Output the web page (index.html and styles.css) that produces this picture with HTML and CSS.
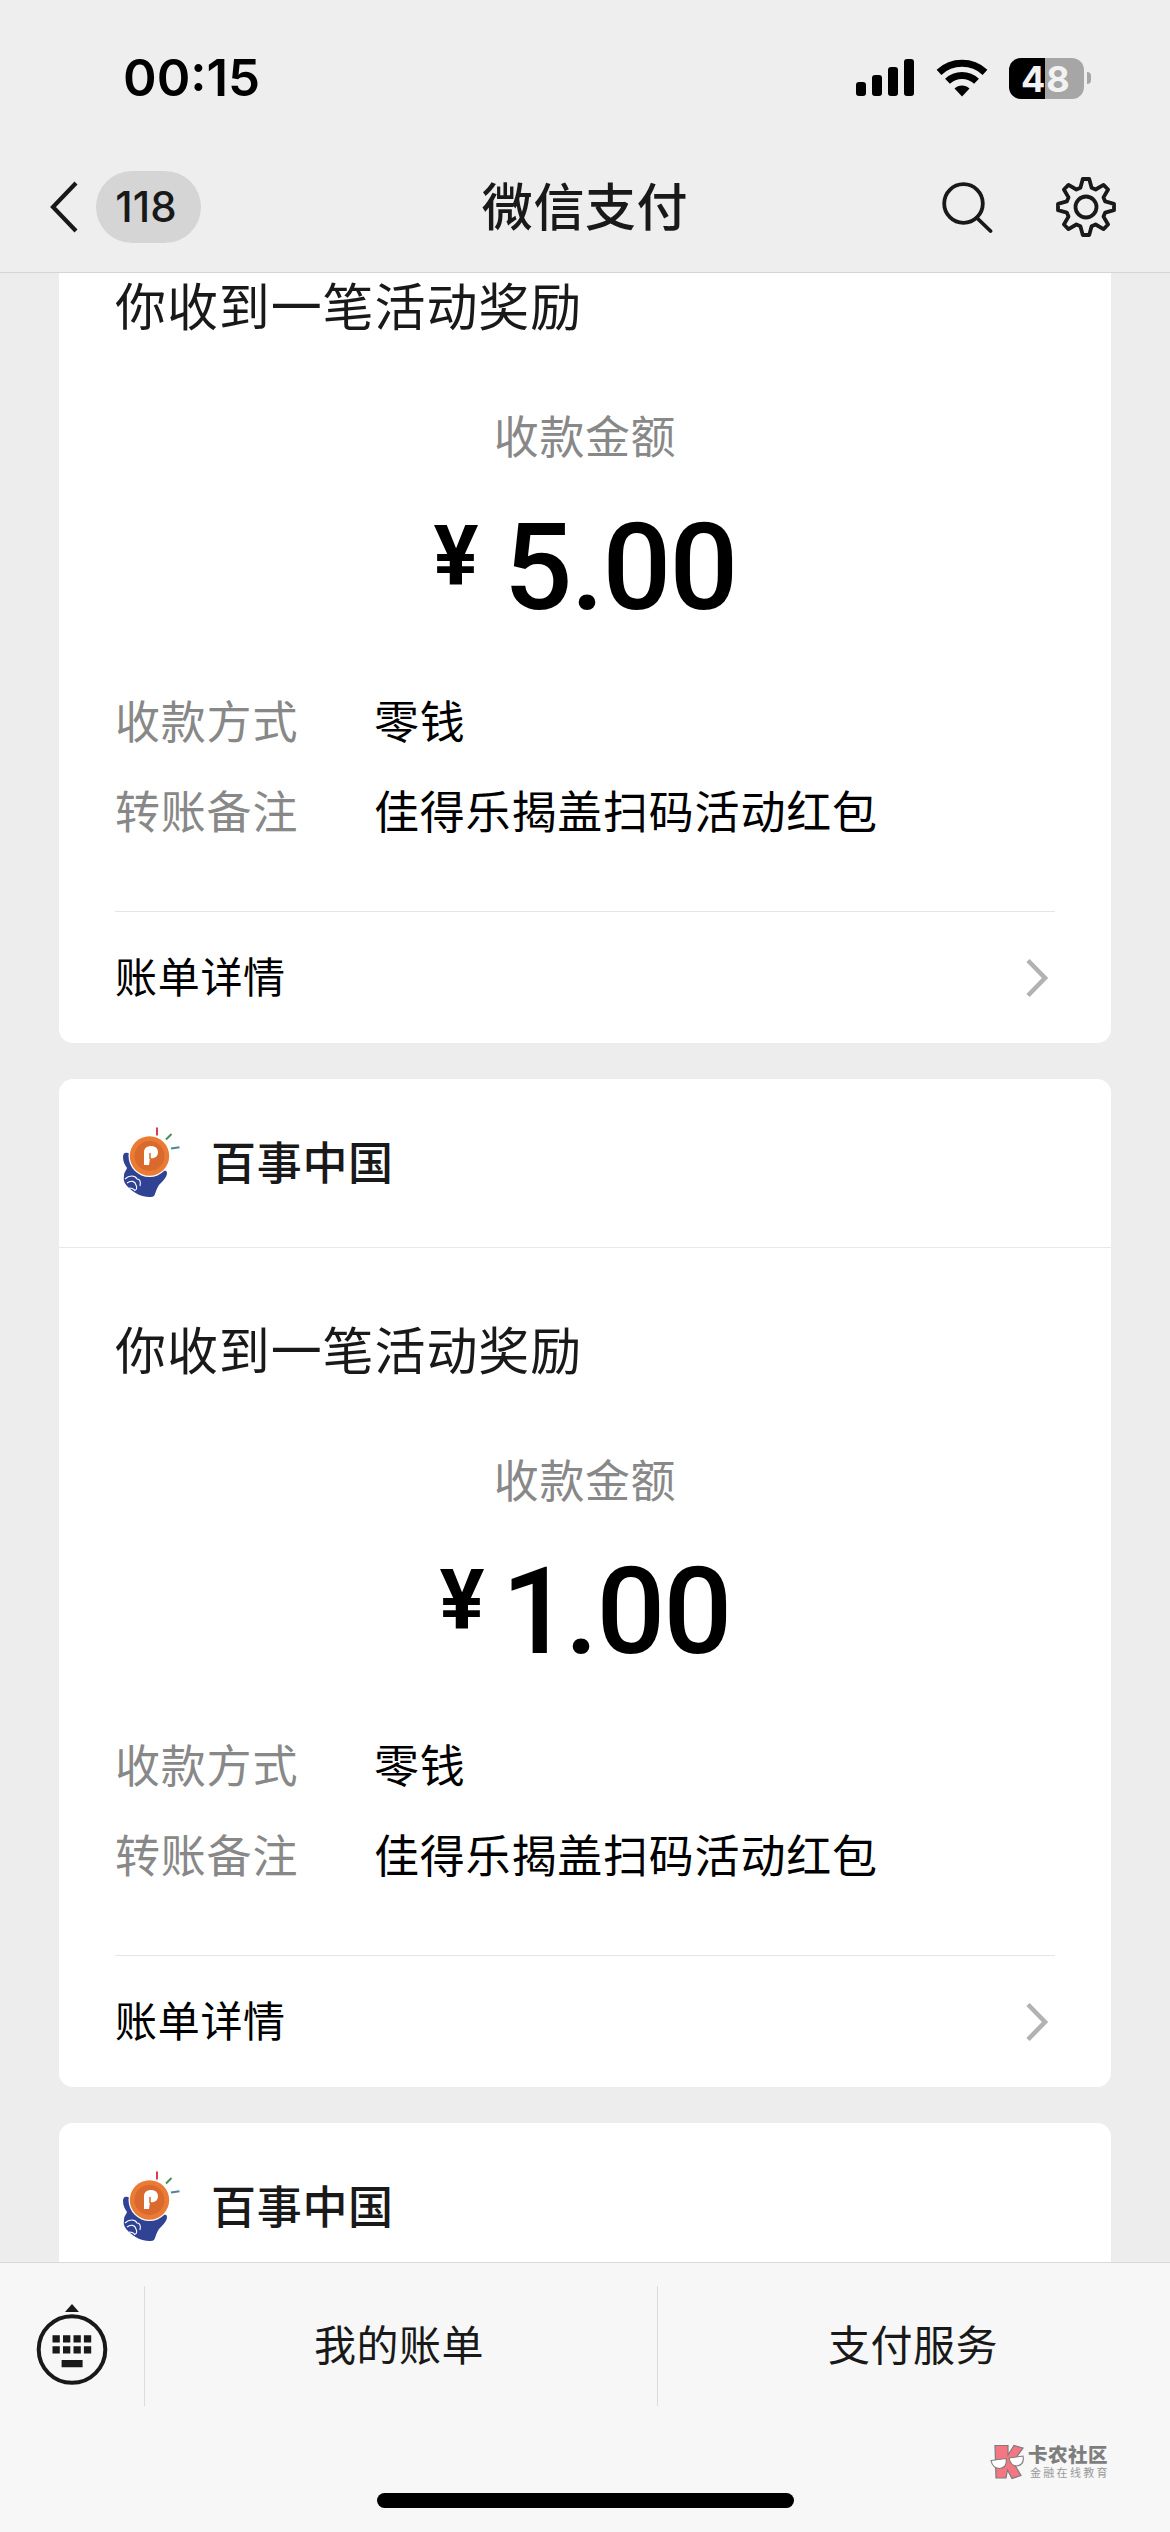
FILE: index.html
```html
<!DOCTYPE html>
<html lang="zh-CN">
<head>
<meta charset="utf-8">
<title>微信支付</title>
<link rel="stylesheet" href="styles.css">
</head>
<body>
<svg class="defs" width="0" height="0" aria-hidden="true">
  <symbol id="chevron" viewBox="0 0 24 42">
    <path d="M3 3.5 20 21 3 38.5" fill="none" stroke="#b2b2b2" stroke-width="4.6"/>
  </symbol>
  <symbol id="brand" viewBox="0 0 60 74">
    <path d="M1 31c0-4 2-5 5-4 2 0 2 3 2 6 2 9 9 16 18 17 6 1 11-3 14-5 2-1 5-1 5 2 0 4-4 8-8 12-2 3-3 6-4 9-1 3-3 3-6 3-7 0-15-4-20-9-4-4-6-7-5-12 0-4 2-5 3-8C3 39 1 36 1 31z" fill="#2f4293"/>
    <path d="M3 53c4-4 10-4 12 0 3 0 4 3 3 7M5 57c4-3 8-2 9 2 1 2 1 5-1 5M7 62c3 0 5 1 6 3" fill="none" stroke="#fff" stroke-width="1.1"/>
    <circle cx="27.500" cy="30" r="21" fill="#fff"/>
    <circle cx="27.500" cy="30" r="19.700" fill="#ea7b35"/>
    <circle cx="27.500" cy="30" r="15" fill="#d9692c"/>
    <path d="M22 39V26c0-8 14-8 14 0 0 5-4 7-8 6l-1 7z" fill="#fff"/>
    <path d="M28 27v6" stroke="#d9692c" stroke-width="1.500"/>
    <path d="M35 1.500v8" stroke="#d8334a" stroke-width="1.900"/>
    <path d="m44 13.500 5.500-5.500" stroke="#4d8c57" stroke-width="1.900"/>
    <path d="m49 22.500 8.500-1.200" stroke="#4a8598" stroke-width="1.900"/>
  </symbol>
</svg>

<div class="screen">
  <header class="top">
    <div class="status">
      <span class="time">00:15</span>
      <div class="indicators">
        <svg class="signal" viewBox="0 0 58 38"><rect x="0" y="23" width="10" height="14" rx="3"/><rect x="16" y="16" width="10" height="21" rx="3"/><rect x="32" y="8" width="10" height="29" rx="3"/><rect x="48" y="0" width="10" height="37" rx="3"/></svg>
        <svg class="wifi" viewBox="0 0 52 38"><path d="M26 37.500 18.500 29.500C22.500 25.500 29.500 25.500 33.500 29.500z"/><path d="M11.500 22.300A21 21 0 0 1 40.500 22.300" fill="none" stroke="#000" stroke-width="7"/><path d="M3 13.300A34 34 0 0 1 49 13.300" fill="none" stroke="#000" stroke-width="7"/></svg>
        <div class="battery"><span class="level"><b>4</b><b class="rest">8</b></span><i class="nub"></i></div>
      </div>
    </div>
    <nav class="nav">
      <div class="back">
        <svg class="arrow" viewBox="0 0 30 52"><path d="M27 2 4 26l23 24" fill="none" stroke="#191919" stroke-width="4.200"/></svg>
        <span class="unread">118</span>
      </div>
      <h1 class="title">微信支付</h1>
      <div class="tools">
        <svg class="search" viewBox="0 0 52 52"><circle cx="22.500" cy="22.500" r="19.300"/><path d="m36 37 13.500 13"/></svg>
        <svg class="gear" viewBox="-31 -31 62 62"><path d="M-5.600-19.200-3.200-28H3.200L5.600-19.200 9.600-17.500 17.500-22.100 22.100-17.500 17.500-9.600 19.200-5.600 28-3.200V3.200L19.200 5.600 17.500 9.600 22.100 17.500 17.500 22.100 9.600 17.500 5.600 19.200 3.200 28H-3.200L-5.600 19.200-9.600 17.500-17.500 22.100-22.100 17.500-17.500 9.600-19.200 5.600-28 3.200V-3.200L-19.200-5.600-17.500-9.600-22.100-17.500-17.500-22.100-9.600-17.500z"/><circle r="10.500"/></svg>
      </div>
    </nav>
  </header>

  <main class="feed">
    <article class="card card-cut">
      <div class="body">
        <h2 class="headline">你收到一笔活动奖励</h2>
        <p class="label">收款金额</p>
        <p class="amount"><span class="yen">¥</span><span class="num">5.00</span></p>
        <dl class="details">
          <dt>收款方式</dt><dd>零钱</dd>
          <dt>转账备注</dt><dd>佳得乐揭盖扫码活动红包</dd>
        </dl>
        <div class="more"><span>账单详情</span><svg class="chev"><use href="#chevron"/></svg></div>
      </div>
    </article>

    <article class="card">
      <div class="merchant"><svg class="brand"><use href="#brand"/></svg><span>百事中国</span></div>
      <div class="body">
        <h2 class="headline">你收到一笔活动奖励</h2>
        <p class="label">收款金额</p>
        <p class="amount"><span class="yen">¥</span><span class="num"><span class="one">1</span>.00</span></p>
        <dl class="details">
          <dt>收款方式</dt><dd>零钱</dd>
          <dt>转账备注</dt><dd>佳得乐揭盖扫码活动红包</dd>
        </dl>
        <div class="more"><span>账单详情</span><svg class="chev"><use href="#chevron"/></svg></div>
      </div>
    </article>

    <article class="card">
      <div class="merchant"><svg class="brand"><use href="#brand"/></svg><span>百事中国</span></div>
    </article>
  </main>

  <footer class="bottom">
    <div class="menu">
      <div class="kbd">
        <svg viewBox="0 0 72 84"><path d="M36 2l7 8H29z" fill="#191919"/><circle cx="36" cy="47.500" r="33.300" fill="none" stroke="#191919" stroke-width="4"/><path d="M16.500 33.300h7.300v7.300h-7.300zM27 33.300h7.300v7.300H27zM37.500 33.300h7.300v7.300h-7.300zM47.900 33.300h7.300v7.300h-7.300zM16.500 44.200h7.300v7.300h-7.300zM27 44.200h7.300v7.300H27zM37.500 44.200h7.300v7.300h-7.300zM47.900 44.200h7.300v7.300h-7.300zM25.600 58h21v7.300h-21z" fill="#191919"/></svg>
      </div>
      <span class="item">我的账单</span>
      <span class="item item-last">支付服务</span>
    </div>
    <div class="mark">
      <svg viewBox="0 0 34 36"><path d="M5 1.500 18 1.500 18 11 24 1.500 33 4 23 18 31 31.500 22 34.500 17.500 26 16 34H6z" fill="#f57683" stroke="#7c7c7c" stroke-width="1.200"/><path d="M1 16.500 16 14.500c1 5-1 9-6 10-5 0-8-3-9-8zM19 14l14-2c1 5-1 9-6 10-4 0-7-3-8-8z" fill="#fff" stroke="#7c7c7c" stroke-width="1.100"/></svg>
      <div class="mark-text"><span class="mark-name">卡农社区</span><span class="mark-sub">金融在线教育</span></div>
    </div>
    <div class="home"></div>
  </footer>
</div>
</body>
</html>
```
FILE: styles.css
```css
* { box-sizing: border-box; }
body, h1, h2, p, dl, dd { margin: 0; }
body {
  background: #ededed;
  color: #191919;
  font-family: "Noto Sans CJK SC", sans-serif;
}
svg { display: block; flex: none; }
.defs { position: absolute; }

.screen {
  width: 1170px;
  height: 2532px;
  display: flex;
  flex-direction: column;
  overflow: hidden;
}

/* status bar and navigation */
.top {
  height: 273px;
  flex: none;
  background: #eeeeee;
  border-bottom: 1px solid #d5d5d5;
}
.status {
  height: 141px;
  padding: 15px 79px 0 123px;
  display: flex;
  align-items: center;
  justify-content: space-between;
}
.time {
  font: 600 51px/60px Inter, sans-serif;
  color: #000;
}
.indicators { display: flex; align-items: center; }
.signal { width: 58px; height: 38px; }
.wifi { width: 52px; height: 38px; margin-left: 22px; }
.battery { display: flex; align-items: center; margin-left: 21px; gap: 3px; }
.level {
  width: 75px;
  height: 41px;
  padding-left: 12px;
  border-radius: 12px;
  background: linear-gradient(90deg, #000 36px, #a6a6a6 36px);
  display: flex;
  font: 700 36px/42px Inter, sans-serif;
  color: #f2f2f2;
}
.level b { font-weight: 650; }
.rest { margin-left: 1px; }
.nub { width: 4px; height: 12px; border-radius: 0 6px 6px 0; background: #a6a6a6; }

.nav {
  height: 131px;
  display: grid;
  grid-template-columns: 1fr auto 1fr;
  align-items: center;
}
.back { display: flex; align-items: center; padding-left: 49px; }
.arrow { width: 30px; height: 52px; }
.unread {
  width: 105px;
  height: 72px;
  margin-left: 17px;
  padding-right: 5px;
  border-radius: 36px;
  background: #d5d5d5;
  text-align: center;
  font: 500 42px/72px Inter, sans-serif;
}
.title {
  padding-bottom: 5px;
  font-size: 51px;
  font-weight: 500;
  line-height: 60px;
  letter-spacing: 0.6px;
}
.tools { display: flex; align-items: center; justify-content: flex-end; padding-right: 53px; }
.search, .gear { fill: none; stroke: #191919; stroke-width: 3.8; stroke-linejoin: round; stroke-linecap: round; }
.search { width: 52px; height: 52px; margin-right: 62px; }
.gear { width: 62px; height: 62px; }

/* message feed */
.feed {
  flex: 1;
  min-height: 0;
  overflow: hidden;
  padding: 0 59px;
  display: flex;
  flex-direction: column;
  gap: 36px;
}
.card { flex: none; background: #fff; border-radius: 14px; }
.card-cut { border-radius: 0 0 14px 14px; }
.merchant {
  height: 169px;
  padding: 0 63px;
  display: flex;
  align-items: center;
  border-bottom: 1px solid #e8e8e8;
  font-size: 45px;
  font-weight: 500;
  letter-spacing: 0.7px;
}
.merchant span { padding-bottom: 5px; }
.brand { width: 60px; height: 74px; margin-right: 29px; }
.body { padding: 70px 56px 0; }
.card-cut .body { padding-top: 1px; }
.headline { font-size: 51px; line-height: 60px; font-weight: 400; letter-spacing: 0.9px; }
.label {
  margin-top: 71px;
  font-size: 45px;
  line-height: 60px;
  letter-spacing: 0.6px;
  text-align: center;
  color: #888;
}
.amount {
  height: 120px;
  margin-top: 43px;
  display: flex;
  justify-content: center;
  color: #000;
  font-family: Roboto, sans-serif;
}
.yen { margin-right: 25px; font-size: 84px; line-height: 98px; font-weight: 700; }
.num { font-size: 121px; line-height: 120px; font-weight: 500; letter-spacing: -1.8px; }
.one { margin-left: -8px; letter-spacing: -5.5px; }
.details {
  margin-top: 47px;
  display: grid;
  grid-template-columns: 259px 1fr;
  font-size: 45px;
  line-height: 90px;
  letter-spacing: 0.8px;
}
.details dt { color: #888; }
.details dd { color: #000; }
.more {
  height: 132px;
  margin-top: 56px;
  padding-right: 6px;
  border-top: 1px solid #e5e5e5;
  display: flex;
  align-items: center;
  justify-content: space-between;
  font-size: 42px;
  letter-spacing: 0.7px;
  color: #000;
}
.more span { padding-bottom: 7px; }
.chev { width: 24px; height: 42px; }

/* bottom menu */
.bottom {
  height: 270px;
  flex: none;
  background: #f7f7f7;
  border-top: 1px solid #d9d9d9;
}
.menu { height: 168px; padding: 23px 0 25px; display: grid; grid-template-columns: 144px 1fr 1fr; }
.kbd { display: flex; justify-content: center; padding-top: 16px; }
.kbd svg { width: 72px; height: 84px; }
.item {
  padding-right: 4px;
  border-left: 1px solid #dcdcdc;
  text-align: center;
  font-size: 42px;
  line-height: 114px;
  letter-spacing: 0.5px;
}
.item-last { padding-right: 2px; }
.mark { height: 62px; padding: 13px 0 0 990px; display: flex; gap: 4px; }
.mark svg { width: 34px; height: 36px; }
.mark-text { display: flex; flex-direction: column; white-space: nowrap; }
.mark-name { font-size: 19.5px; line-height: 20px; font-weight: 900; letter-spacing: 0.5px; color: #7e7e7e; }
.mark-sub { padding-left: 2px; font-size: 11px; line-height: 17px; letter-spacing: 2.3px; color: #999; }
.home { width: 417px; height: 15px; margin: 0 auto; border-radius: 8px; background: #000; }
```
